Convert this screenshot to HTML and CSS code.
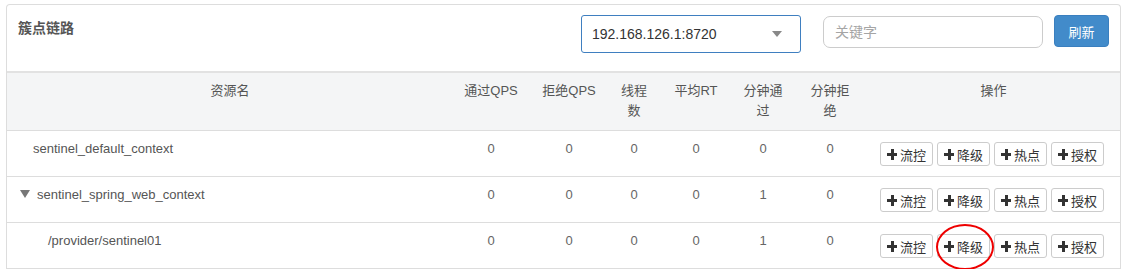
FILE: index.html
```html
<!DOCTYPE html>
<html lang="zh-CN">
<head>
    <meta charset="UTF-8">
    <title>簇点链路</title>
    <link rel="stylesheet" href="styles.css">
</head>
<body>
    <div class="card">
        <div class="card-head">
            <div class="card-title">簇点链路</div>
            <div class="machine-select">
                <span>192.168.126.1:8720</span>
                <i class="caret"></i>
            </div>
            <input type="text" class="search" placeholder="关键字">
            <button class="btn-primary">刷新</button>
        </div>

        <table class="tree-table">
            <colgroup>
                <col style="width: 446px">
                <col style="width: 76px">
                <col style="width: 80px">
                <col style="width: 50px">
                <col style="width: 74px">
                <col style="width: 60px">
                <col style="width: 74px">
                <col>
            </colgroup>
            <thead>
                <tr>
                    <th>资源名</th>
                    <th>通过QPS</th>
                    <th>拒绝QPS</th>
                    <th>线程数</th>
                    <th>平均RT</th>
                    <th>分钟通过</th>
                    <th class="tight">分钟拒绝</th>
                    <th>操作</th>
                </tr>
            </thead>
            <tbody>
                <tr>
                    <td class="name leaf">sentinel_default_context</td>
                    <td>0</td>
                    <td>0</td>
                    <td>0</td>
                    <td>0</td>
                    <td>0</td>
                    <td>0</td>
                    <td class="ops">
                        <div class="ops-group">
                            <button class="btn-op"><i class="plus"></i>流控</button>
                            <button class="btn-op"><i class="plus"></i>降级</button>
                            <button class="btn-op"><i class="plus"></i>热点</button>
                            <button class="btn-op"><i class="plus"></i>授权</button>
                        </div>
                    </td>
                </tr>
                <tr>
                    <td class="name parent"><i class="expander"></i>sentinel_spring_web_context</td>
                    <td>0</td>
                    <td>0</td>
                    <td>0</td>
                    <td>0</td>
                    <td>1</td>
                    <td>0</td>
                    <td class="ops">
                        <div class="ops-group">
                            <button class="btn-op"><i class="plus"></i>流控</button>
                            <button class="btn-op"><i class="plus"></i>降级</button>
                            <button class="btn-op"><i class="plus"></i>热点</button>
                            <button class="btn-op"><i class="plus"></i>授权</button>
                        </div>
                    </td>
                </tr>
                <tr>
                    <td class="name child">/provider/sentinel01</td>
                    <td>0</td>
                    <td>0</td>
                    <td>0</td>
                    <td>0</td>
                    <td>1</td>
                    <td>0</td>
                    <td class="ops">
                        <div class="ops-group">
                            <button class="btn-op"><i class="plus"></i>流控</button>
                            <button class="btn-op marked"><i class="plus"></i>降级<span class="ring"></span></button>
                            <button class="btn-op"><i class="plus"></i>热点</button>
                            <button class="btn-op"><i class="plus"></i>授权</button>
                        </div>
                    </td>
                </tr>
            </tbody>
        </table>
    </div>
</body>
</html>
```

FILE: styles.css
```css
body {
    margin: 0;
    padding: 4px 5px 0 6px;
    font-family: "Liberation Sans", Arial, "Noto Sans CJK SC", sans-serif;
    font-size: 13px;
    color: #555;
    background: #fff;
}

.card {
    border: 1px solid #ddd;
    border-bottom: none;
    border-radius: 4px 4px 0 0;
    background: #fff;
}

.card-head {
    display: flex;
    align-items: flex-start;
    height: 56px;
    padding: 10px 11px 0 11px;
    border-bottom: 2px solid #e2e2e2;
}

.card-title {
    flex: 1;
    margin-top: 3px;
    line-height: 20px;
    font-size: 14px;
    font-weight: bold;
    color: #555;
}

.machine-select {
    box-sizing: border-box;
    width: 220px;
    height: 38px;
    margin-right: 22px;
    padding: 0 18px 0 10px;
    display: flex;
    align-items: center;
    justify-content: space-between;
    border: 1px solid #3f7fc0;
    border-radius: 3px;
    font-size: 14px;
    color: #333;
}

.caret {
    width: 0;
    height: 0;
    border-left: 5px solid transparent;
    border-right: 5px solid transparent;
    border-top: 6px solid #888;
}

.search {
    box-sizing: border-box;
    width: 220px;
    height: 32px;
    margin: 1px 11px 0 0;
    padding: 0 11px;
    border: 1px solid #ccc;
    border-radius: 7px;
    font-family: inherit;
    font-size: 14px;
    color: #555;
}

.search::placeholder {
    color: #a5a5a5;
}

.btn-primary {
    box-sizing: border-box;
    width: 55px;
    height: 32px;
    border: 1px solid #3a7fbf;
    border-radius: 4px;
    background: #428bca;
    color: #fff;
    font-family: inherit;
    font-size: 13px;
}

.tree-table {
    width: 100%;
    table-layout: fixed;
    border-collapse: collapse;
}

.tree-table th {
    background: #f4f5f6;
    font-weight: normal;
    color: #555;
    line-height: 20px;
    padding: 8px 8px 9px;
    text-align: center;
    vertical-align: top;
    border-bottom: 1px solid #ddd;
}

.tree-table th.tight {
    padding-left: 12px;
    padding-right: 12px;
}

.tree-table td {
    line-height: 20px;
    padding: 8px 8px 17px;
    text-align: center;
    vertical-align: top;
    color: #666;
    border-bottom: 1px solid #ddd;
}

.tree-table td.name {
    text-align: left;
    color: #555;
}

.tree-table td.leaf {
    padding-left: 26px;
}

.tree-table td.parent {
    padding-left: 13px;
}

.tree-table td.child {
    padding-left: 41px;
}

.expander {
    display: inline-block;
    width: 0;
    height: 0;
    margin-right: 7px;
    border-left: 5px solid transparent;
    border-right: 5px solid transparent;
    border-top: 8px solid #777;
    vertical-align: 1px;
}

.tree-table td.ops {
    padding: 11px 0 10px;
}

.ops-group {
    display: flex;
    justify-content: center;
    gap: 4px;
    padding-right: 3px;
}

.btn-op {
    position: relative;
    box-sizing: border-box;
    width: 53px;
    height: 24px;
    padding: 0 0 0 6px;
    display: inline-flex;
    align-items: center;
    gap: 3px;
    border: 1px solid #ccc;
    border-radius: 3px;
    background: #fff;
    color: #333;
    font-family: inherit;
    font-size: 13px;
}

.plus {
    position: relative;
    width: 10px;
    height: 10px;
}

.plus::before,
.plus::after {
    content: "";
    position: absolute;
    background: #333;
}

.plus::before {
    left: 0;
    top: 4px;
    width: 10px;
    height: 3px;
}

.plus::after {
    left: 3.5px;
    top: 0;
    width: 3px;
    height: 11px;
}

.ring {
    position: absolute;
    left: -2px;
    top: -11px;
    width: 54px;
    height: 42px;
    border: 2px solid #e00;
    border-radius: 50%;
}
```
